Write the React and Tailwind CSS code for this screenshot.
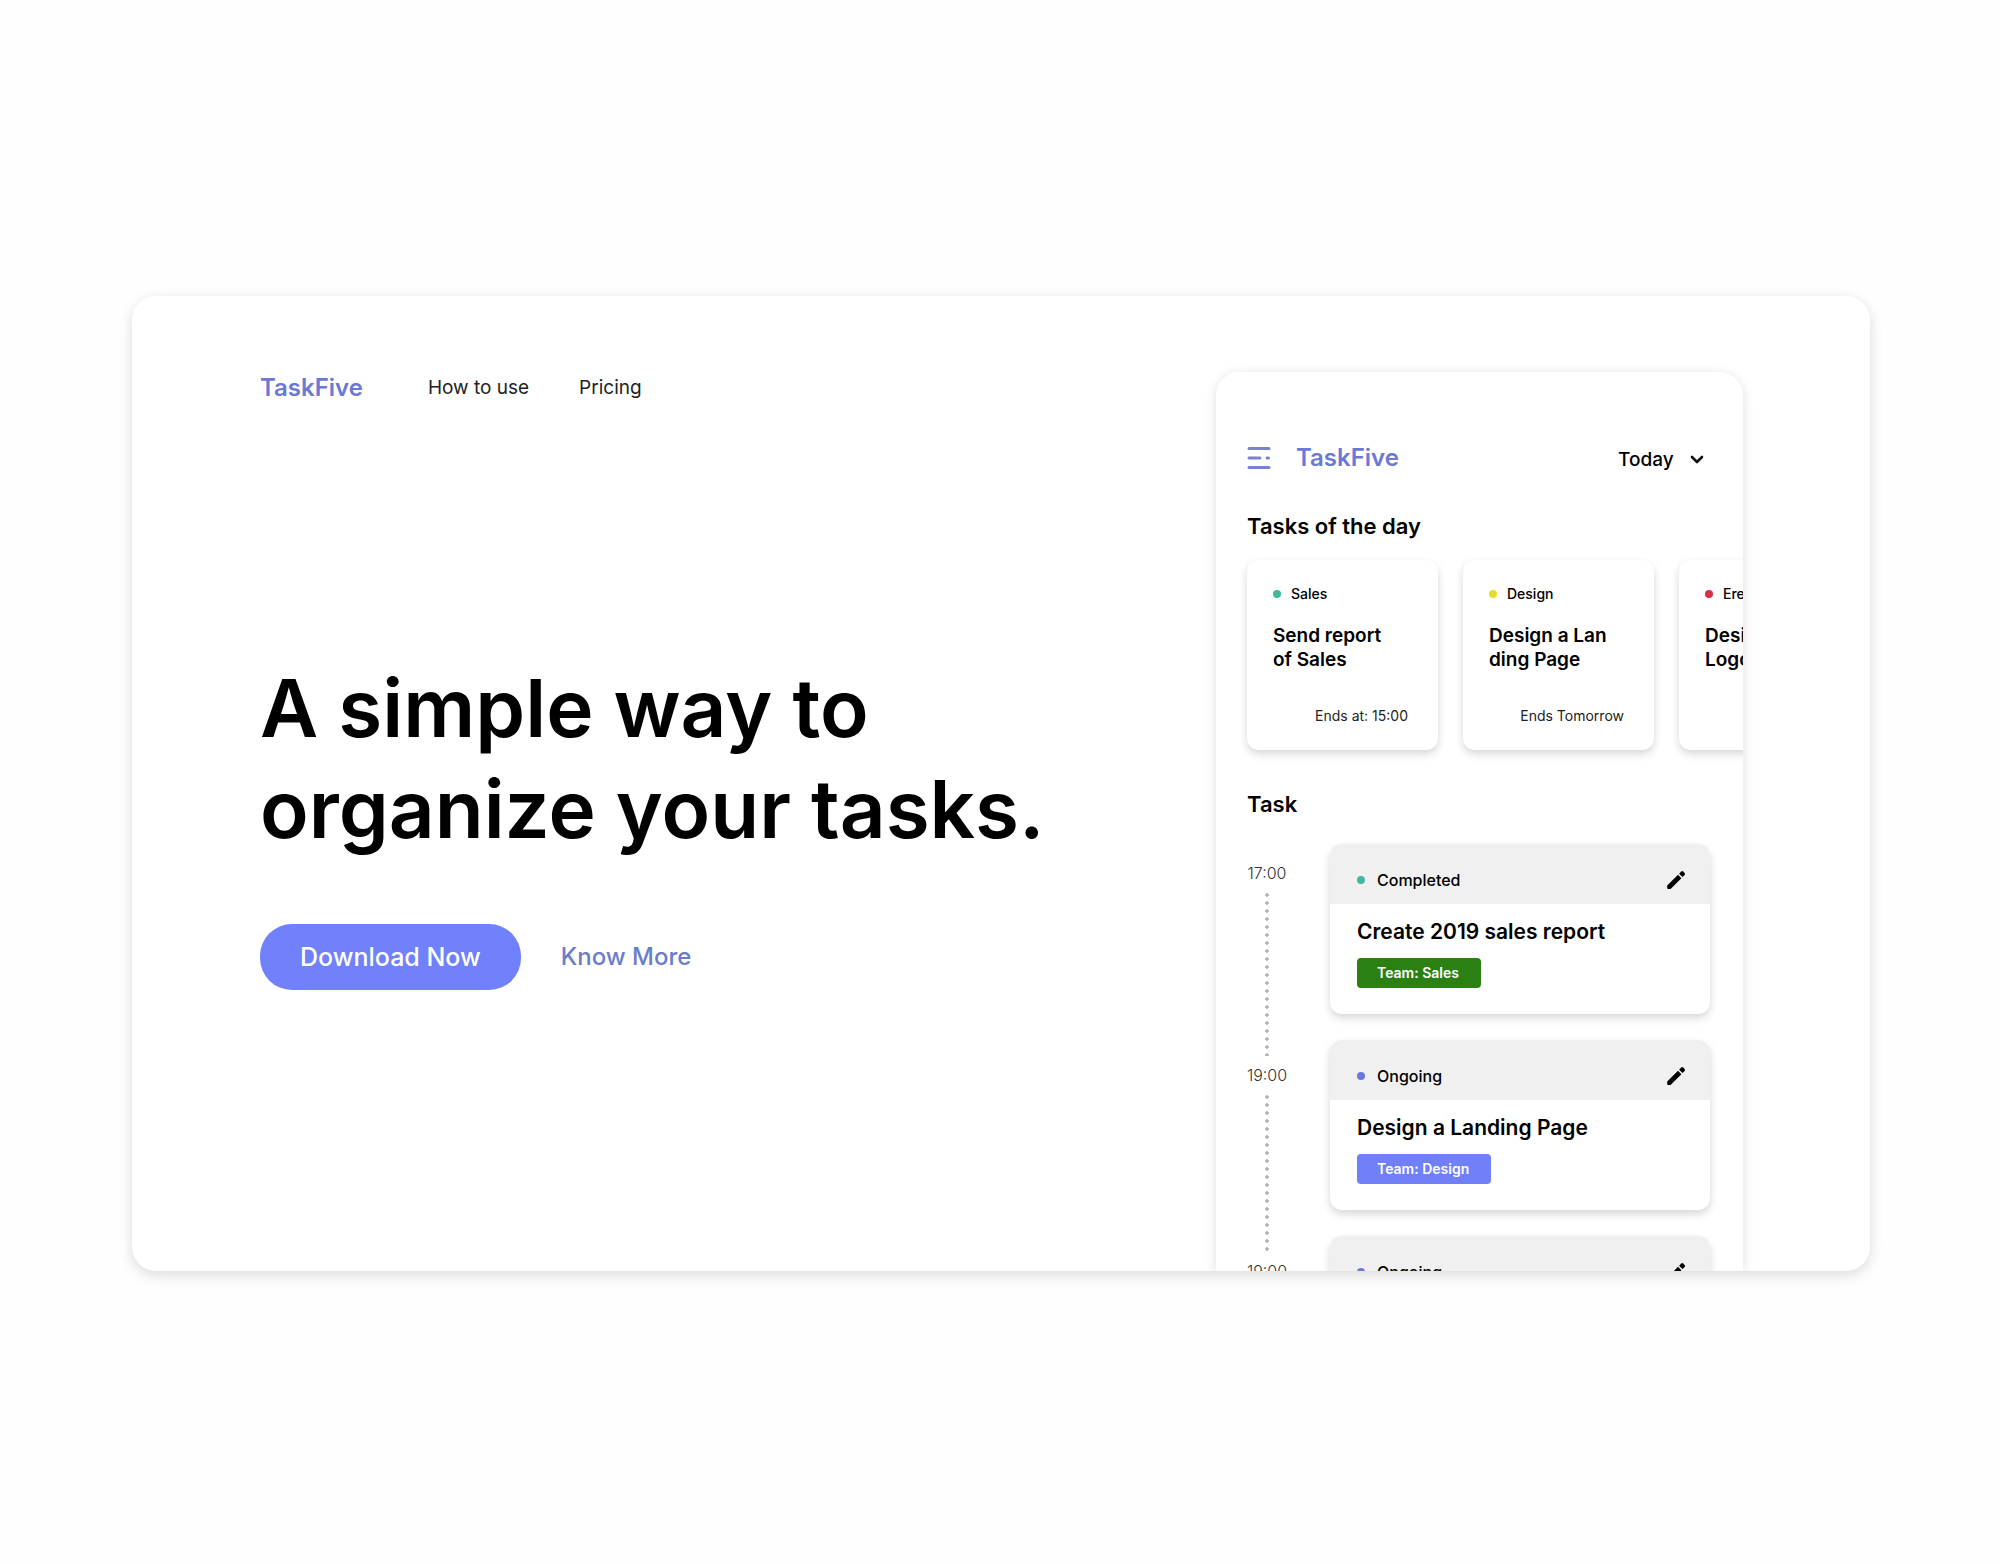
import React from "react";

const dayTasks = [
  { team: "Sales", dot: "bg-[#3fb99a]", lines: ["Send report", "of Sales"], ends: "Ends at: 15:00" },
  { team: "Design", dot: "bg-[#e6dc2e]", lines: ["Design a Lan", "ding Page"], ends: "Ends Tomorrow" },
  { team: "Erena", dot: "bg-[#d92f45]", lines: ["Design", "Logo"], ends: "" },
];

const schedule = [
  { time: "17:00", pad: "pt-[19px]", status: "Completed", dot: "bg-[#3fb99a]", title: "Create 2019 sales report", team: "Team: Sales", badge: "bg-[#2a8012]" },
  { time: "19:00", pad: "pt-[25px]", status: "Ongoing", dot: "bg-[#6b78e0]", title: "Design a Landing Page", team: "Team: Design", badge: "bg-[#6f80f8]" },
  { time: "19:00", pad: "pt-[25px]", status: "Ongoing", dot: "bg-[#6b78e0]", title: "Design a Landing Page", team: "Team: Design", badge: "bg-[#6f80f8]" },
];

function MenuIcon() {
  return (
    <svg width="24" height="24" viewBox="0 0 24 24" fill="none" stroke="#7a82cf" strokeWidth="3" strokeLinecap="round">
      <path d="M2 2.5h20M2 12h11M20 12h1.5M2 21.5h20" />
    </svg>
  );
}

function ChevronIcon() {
  return (
    <svg width="14" height="10" viewBox="0 0 14 10" fill="none" stroke="#111" strokeWidth="2.6" strokeLinecap="round" strokeLinejoin="round">
      <path d="M2 2l5 5 5-5" />
    </svg>
  );
}

function PencilIcon() {
  return (
    <svg width="20" height="20" viewBox="0 0 20 20" fill="#000">
      <path d="M1.2 15.6L12 4.8l3.4 3.4L4.6 19H2.2a1 1 0 0 1-1-1zM13.1 3.7l2.1-2.1a1.4 1.4 0 0 1 2 0l1.4 1.4a1.4 1.4 0 0 1 0 2l-2.1 2.1z" />
    </svg>
  );
}

function DayCard({ task }) {
  return (
    <li className="flex h-[190px] w-[191px] shrink-0 flex-col rounded-xl bg-white px-[26px] py-6 shadow-[0_4px_8px_rgba(0,0,0,0.16)]">
      <div className="flex items-center gap-2.5 text-sm leading-5 font-medium">
        <span className={`h-2 w-2 rounded-full ${task.dot}`} />
        {task.team}
      </div>
      <h3 className="mt-5 text-[19px] leading-6 font-semibold whitespace-nowrap">
        {task.lines[0]}
        <br />
        {task.lines[1]}
      </h3>
      <p className="mt-auto pr-1 text-right text-sm leading-5 whitespace-nowrap text-[#222]">{task.ends}</p>
    </li>
  );
}

function ScheduleRow({ item }) {
  return (
    <li className="flex gap-[43px]">
      <div className={`flex w-10 shrink-0 flex-col items-center ${item.pad}`}>
        <time className="text-base leading-5 font-light text-[#333]">{item.time}</time>
        <span className="mt-2 -mb-4 w-1 flex-1 bg-[radial-gradient(circle,#b4b4b4_1.5px,transparent_2px)] bg-[length:4px_8px]" />
      </div>
      <div className="min-w-0 flex-1 pb-[26px]">
        <article className="overflow-hidden rounded-xl bg-white shadow-[0_4px_8px_rgba(0,0,0,0.16)]">
          <header className="flex h-[60px] items-center bg-[#f0f0f0] pt-3 pr-6 pl-[27px]">
            <span className={`h-2 w-2 rounded-full ${item.dot}`} />
            <span className="ml-3 text-base leading-5 font-medium">{item.status}</span>
            <button type="button" aria-label="Edit task" className="ml-auto">
              <PencilIcon />
            </button>
          </header>
          <div className="h-[110px] px-[27px] pt-3.5">
            <h3 className="text-[21px] leading-7 font-semibold whitespace-nowrap">{item.title}</h3>
            <span className={`mt-3 inline-block rounded pr-[22px] pl-5 text-sm leading-[30px] font-semibold text-white ${item.badge}`}>{item.team}</span>
          </div>
        </article>
      </div>
    </li>
  );
}

function Phone() {
  return (
    <section aria-label="App preview" className="h-full w-[527px] shrink-0 overflow-hidden rounded-t-3xl bg-white pt-[70px] pr-[33px] pl-[31px]">
      <div className="flex items-center pr-1.5">
        <button type="button" aria-label="Menu">
          <MenuIcon />
        </button>
        <span className="ml-[25px] text-2xl leading-8 font-semibold text-[#6b79d6]">TaskFive</span>
        <label className="ml-auto flex items-center gap-4 pt-1">
          <select aria-label="Day" className="appearance-none bg-transparent text-[19px] leading-6 font-medium outline-none">
            <option>Today</option>
          </select>
          <ChevronIcon />
        </label>
      </div>
      <h2 className="mt-[38px] text-[22px] leading-7 font-semibold">Tasks of the day</h2>
      <ul className="mt-5 flex gap-[25px]">
        {dayTasks.map((task) => (
          <DayCard key={task.team} task={task} />
        ))}
      </ul>
      <h2 className="mt-10 text-[22px] leading-7 font-semibold">Task</h2>
      <ul className="mt-[26px]">
        {schedule.map((item, i) => (
          <ScheduleRow key={i} item={item} />
        ))}
      </ul>
    </section>
  );
}

export default function App() {
  return (
    <main className="flex min-h-screen flex-col justify-center bg-[#fefefe] pt-0.5 pr-[130px] pl-[132px] font-['Inter',sans-serif] text-black">
      <div className="flex aspect-[1738/975] justify-between overflow-hidden rounded-3xl bg-white pr-[127px] pl-[128px] shadow-[0_4px_14px_rgba(0,0,0,0.14)]">
        <div className="flex flex-col pt-[76px]">
          <nav className="flex items-center text-[19px] leading-8">
            <a href="#home" className="text-2xl leading-8 font-semibold text-[#6b79d6]">TaskFive</a>
            <a href="#how" className="ml-[65px] text-[#222]">How to use</a>
            <a href="#pricing" className="ml-[50px] text-[#222]">Pricing</a>
          </nav>
          <h1 className="mt-[253px] text-[80px] leading-[101px] font-semibold whitespace-nowrap">
            A simple way to
            <br />
            organize your tasks.
          </h1>
          <div className="mt-[65px] flex items-center gap-10 text-2xl">
            <button type="button" className="h-[66px] rounded-[32px] bg-[#7081fb] px-10 pt-0.5 text-[25px] font-medium text-white">Download Now</button>
            <a href="#more" className="font-medium text-[#6b7ccb]">Know More</a>
          </div>
        </div>
        <div className="pt-[76px]">
          <div className="h-full rounded-t-3xl shadow-[0_2px_12px_rgba(0,0,0,0.13)]">
            <Phone />
          </div>
        </div>
      </div>
    </main>
  );
}
